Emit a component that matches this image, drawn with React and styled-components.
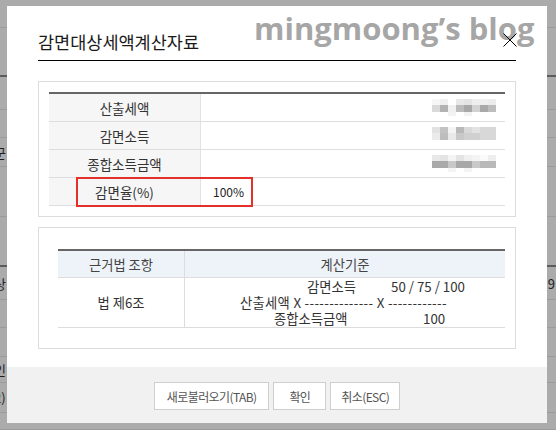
import React from "react"
import styled, { createGlobalStyle } from "styled-components"

const GlobalStyle = createGlobalStyle`
  body {
    margin: 0;
    font-family: "Noto Sans CJK KR", "Noto Sans", sans-serif;
    color: #333;
  }
`

const Page = styled.div`
  position: relative;
  width: 556px;
  height: 430px;
  overflow: hidden;
  background: #ababab;
`

// page behind the modal, dimmed
const Sheet = styled.div`
  display: flex;
  flex-direction: column;
`

const SheetRow = styled.div`
  box-sizing: border-box;
  height: ${({ $h }) => $h}px;
  border-bottom: ${({ $dark }) => ($dark ? "2px solid #5c5c5c" : "1px solid #9b9b9b")};
  display: flex;
  align-items: center;
  justify-content: space-between;
  font-size: 13px;
  color: #1e1e1e;
`

const SheetText = styled.span`
  margin-left: -6px;
`

const SheetTail = styled.span`
  margin-right: 1px;
`

const Dialog = styled.div`
  position: absolute;
  left: 7px;
  top: 6px;
  width: 540px;
  height: 417px;
  background: #fff;
  display: flex;
  flex-direction: column;
`

const Header = styled.div`
  margin: 0 31px;
  padding: 24px 0 6px;
  border-bottom: 1px solid #000;
`

const Title = styled.h1`
  margin: 0;
  font-size: 17.5px;
  line-height: 24px;
  font-weight: 400;
  color: #1a1a1a;
`

const Close = styled.button`
  position: absolute;
  top: 27px;
  right: 30px;
  width: 14px;
  height: 14px;
  padding: 0;
  border: 0;
  background: none;
  z-index: 3;
  display: flex;
`

const Watermark = styled.div`
  position: absolute;
  left: 254px;
  top: 13px;
  font-family: "Open Sans", sans-serif;
  font-weight: 700;
  font-size: 31px;
  line-height: 31px;
  color: rgba(150, 150, 150, 0.85);
  pointer-events: none;
  z-index: 2;
`

const Body = styled.div`
  padding: 20px 31px 0;
  display: flex;
  flex-direction: column;
  gap: 10px;
`

const Panel = styled.div`
  border: 1px solid #dcdcdc;
  padding: ${({ $pad }) => $pad};
`

const SummaryTable = styled.div`
  border-top: 2px solid #666;
`

const SummaryRow = styled.div`
  position: relative;
  display: grid;
  grid-template-columns: 152px 1fr;
  height: 28px;
  box-sizing: border-box;
  border-bottom: 1px solid #dedede;
`

const Label = styled.div`
  background: #f6f6f6;
  border-right: 1px solid #e2e2e2;
  display: flex;
  align-items: center;
  justify-content: center;
  font-size: 13.5px;
  color: #333;
`

const Value = styled.div`
  display: flex;
  align-items: center;
  justify-content: space-between;
  padding: 0 9px 0 12px;
  font-size: 12px;
  color: #222;
`

const Highlight = styled.div`
  position: absolute;
  left: 27px;
  width: 177px;
  top: -1px;
  bottom: -2px;
  box-sizing: border-box;
  border: 2px solid #e3302b;
  pointer-events: none;
`

const RuleTable = styled.div`
  border-top: 2px solid #666;
`

const RuleRow = styled.div`
  display: grid;
  grid-template-columns: 127px 1fr;
  box-sizing: border-box;
  height: ${({ $h }) => $h}px;
  background: ${({ $head }) => ($head ? "#eef3f9" : "#fff")};
  border-bottom: 1px solid #dcdcdc;
  font-size: 13.3px;
  color: ${({ $head }) => ($head ? "#444" : "#333")};
`

const RuleCell = styled.div`
  display: flex;
  align-items: center;
  justify-content: center;
  border-right: ${({ $first }) => ($first ? "1px solid #dcdcdc" : "0")};
`

const Formula = styled.div`
  align-self: center;
  padding-left: 55px;
  display: flex;
  flex-direction: column;
  font-size: 13.3px;
  line-height: 16px;
  white-space: pre;
`

const FormulaLine = styled.div`
  display: grid;
  grid-template-columns: ${({ $split }) => ($split ? `${$split}px auto` : "auto")};
  letter-spacing: ${({ $wide }) => ($wide ? "0.3px" : "0")};
`

const Term = styled.span`
  padding-left: ${({ $indent }) => $indent || 0}px;
`

const Footer = styled.div`
  margin-top: auto;
  height: 56px;
  box-sizing: border-box;
  background: #f1f1f1;
  display: flex;
  justify-content: center;
  align-items: flex-start;
  padding-top: 15px;
  gap: 4px;
`

const Button = styled.button`
  height: 28px;
  box-sizing: border-box;
  padding: 0 ${({ $pad }) => $pad}px;
  border: 1px solid #cfcfcf;
  background: #fff;
  font-family: "Noto Sans CJK KR", sans-serif;
  font-size: 12px;
  color: #555;
  letter-spacing: -0.6px;
`

const mosaics = [
  [
    ["#f6f6f6", "#efefef", "#fff", "#e8e8e8", "#e4e4e4", "#eeeeee", "#efefef", "#ececec"],
    ["#d9d9d9", "#b2b2b2", "#f0f0f0", "#bcbcbc", "#a8a8a8", "#d2d2d2", "#a9a9a9", "#bdbdbd"],
    ["#fff", "#fff", "#f3f3f3", "#fff", "#f3f3f3", "#fff", "#fff", "#fff"],
  ],
  [
    ["#e2e2e2", "#c2c2c2", "#f4f4f4", "#b8b8b8", "#d9d9d9", "#e2e2e2", "#d8d8d8", "#d8d8d8"],
    ["#ebebeb", "#bdbdbd", "#e9e9e9", "#c8c8c8", "#d0d0d0", "#d0d0d0", "#d8d8d8", "#d8d8d8"],
    ["#fff", "#fff", "#fff", "#fff", "#fff", "#fff", "#fff", "#fff"],
  ],
  [
    ["#e8e8e8", "#e4e4e4", "#f4f4f4", "#e4e4e4", "#f0f0f0", "#f4f4f4", "#fafafa", "#eeeeee"],
    ["#a9a9a9", "#a9a9a9", "#c8c8c8", "#a8a8a8", "#a8a8a8", "#c9c9c9", "#b8b8b8", "#b8b8b8"],
    ["#fff", "#fff", "#f4f4f4", "#fff", "#f4f4f4", "#fff", "#fff", "#fff"],
  ],
]

const rowHeights = [6, 7, 4]

const Mosaic = ({ cells }) => {
  let y = 0
  return (
    <svg width="64" height="17" viewBox="0 0 64 17">
      {cells.map((line, r) => {
        const top = y
        y += rowHeights[r]
        return line.map((c, i) => (
          <rect key={`${r}-${i}`} x={i * 8} y={top} width="8" height={rowHeights[r]} fill={c} />
        ))
      })}
    </svg>
  )
}

const summary = [
  { label: "산출세액", mosaic: mosaics[0] },
  { label: "감면소득", mosaic: mosaics[1] },
  { label: "종합소득금액", mosaic: mosaics[2] },
  { label: "감면율(%)", value: "100%", marked: true },
]

const sheet = [
  { h: 28 },
  { h: 49, dark: true },
  { h: 33 },
  { h: 28 },
  { h: 29, text: "군" },
  { h: 50 },
  { h: 50, dark: true },
  { h: 33, text: "상", tail: ".9" },
  { h: 28 },
  { h: 29 },
  { h: 26, text: "인" },
  { h: 30, text: "2)" },
  { h: 17 },
]

const App = () => {
  return (
    <>
      <GlobalStyle />
      <Page>
        <Sheet>
          {sheet.map((r, i) => (
            <SheetRow key={i} $h={r.h} $dark={r.dark}>
              <SheetText>{r.text}</SheetText>
              <SheetTail>{r.tail}</SheetTail>
            </SheetRow>
          ))}
        </Sheet>

        <Dialog>
          <Header>
            <Title>감면대상세액계산자료</Title>
          </Header>
          <Close aria-label="close">
            <svg width="14" height="14" viewBox="0 0 14 14">
              <path d="M0.5 0.5 L13.5 13.5 M13.5 0.5 L0.5 13.5" stroke="#000" strokeWidth="1" fill="none" />
            </svg>
          </Close>

          <Body>
            <Panel $pad="10px 10px 10px 10px">
              <SummaryTable>
                {summary.map((row) => (
                  <SummaryRow key={row.label}>
                    <Label>{row.label}</Label>
                    <Value>
                      <span>{row.value}</span>
                      {row.mosaic && <Mosaic cells={row.mosaic} />}
                    </Value>
                    {row.marked && <Highlight />}
                  </SummaryRow>
                ))}
              </SummaryTable>
            </Panel>

            <Panel $pad="21px 10px 20px 19px">
              <RuleTable>
                <RuleRow $head $h={27}>
                  <RuleCell $first>근거법 조항</RuleCell>
                  <RuleCell>계산기준</RuleCell>
                </RuleRow>
                <RuleRow $h={50}>
                  <RuleCell $first>법 제6조</RuleCell>
                  <Formula>
                    <FormulaLine $split={151}>
                      <Term $indent={67}>감면소득</Term>
                      <Term>50 / 75 / 100</Term>
                    </FormulaLine>
                    <FormulaLine $wide>
                      <Term>산출세액 X -------------- X ------------</Term>
                    </FormulaLine>
                    <FormulaLine $split={183}>
                      <Term $indent={34}>종합소득금액</Term>
                      <Term>100</Term>
                    </FormulaLine>
                  </Formula>
                </RuleRow>
              </RuleTable>
            </Panel>
          </Body>

          <Footer>
            <Button $pad={12}>새로불러오기(TAB)</Button>
            <Button $pad={15}>확인</Button>
            <Button $pad={10}>취소(ESC)</Button>
          </Footer>
        </Dialog>

        <Watermark>mingmoong’s blog</Watermark>
      </Page>
    </>
  )
}

export default App
